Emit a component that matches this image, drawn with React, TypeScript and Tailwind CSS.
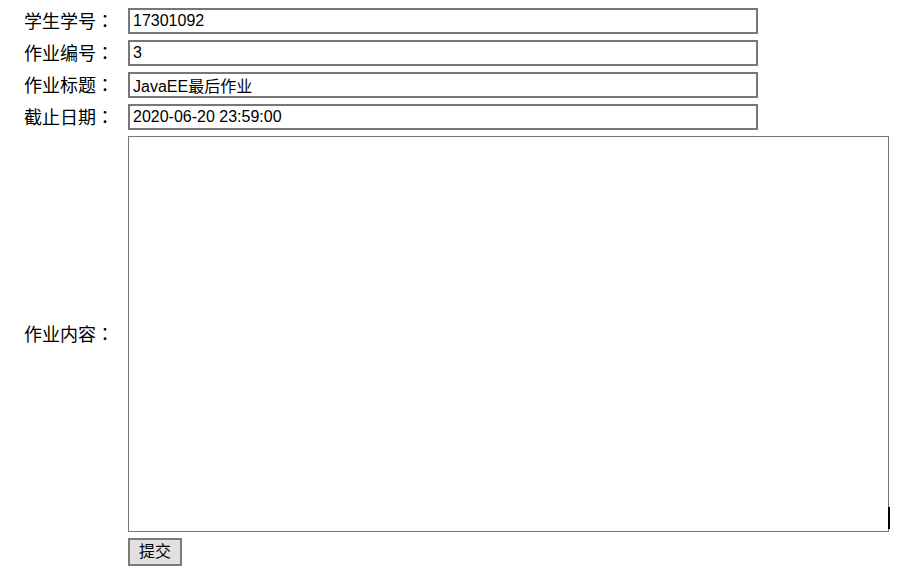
import React from "react";

const labelCls =
  "w-[128px] shrink-0 pl-[24px] text-[18px] leading-none text-black whitespace-nowrap";
const inputCls =
  "h-[26px] w-[630px] border-2 border-[#777777] bg-white px-[3px] text-[16px] text-black outline-none";

function Label({ text }: { text: string }) {
  return (
    <div className={labelCls}>
      {text}
      <span style={{ fontFamily: '"Noto Sans CJK TC", "Noto Sans CJK SC", sans-serif' }}>：</span>
    </div>
  );
}

function Row({ label, value }: { label: string; value: string }) {
  return (
    <div className="flex h-[26px] items-center">
      <Label text={label} />
      <input className={inputCls} defaultValue={value} readOnly />
    </div>
  );
}

export default function App() {
  return (
    <div
      className="flex min-h-[573px] w-[917px] flex-col gap-[6px] bg-white pt-[8px]"
      style={{ fontFamily: '"Liberation Sans", "Noto Sans CJK SC", sans-serif' }}
    >
      <Row label="学生学号" value="17301092" />
      <Row label="作业编号" value="3" />
      <Row label="作业标题" value="JavaEE最后作业" />
      <Row label="截止日期" value="2020-06-20 23:59:00" />
      <div className="flex h-[396px] items-center">
        <Label text="作业内容" />
        <div className="relative h-full">
          <textarea
            className="block h-[396px] w-[761px] resize-none border border-[#767676] bg-white outline-none"
            readOnly
          />
          <div className="absolute right-[-1px] bottom-[3px] h-[22px] w-[2px] bg-black" />
        </div>
      </div>
      <div className="flex">
        <div className="w-[128px] shrink-0" />
        <button className="h-[28px] w-[54px] border-2 border-[#7a7a7a] bg-[#e1e1e1] text-[16px] leading-none text-black">
          提交
        </button>
      </div>
    </div>
  );
}
